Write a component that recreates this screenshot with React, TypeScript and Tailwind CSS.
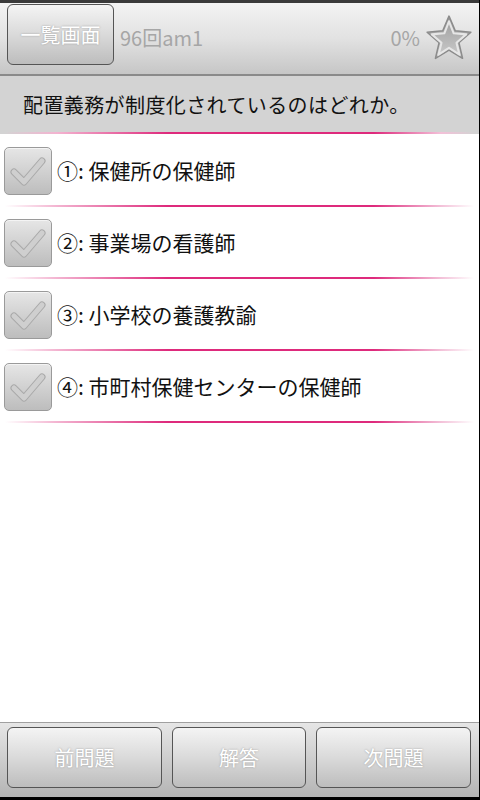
import React from 'react'

const font = { fontFamily: '"Noto Sans CJK JP", "Noto Sans", sans-serif' }

const choices = [
  '①: 保健所の保健師',
  '②: 事業場の看護師',
  '③: 小学校の養護教諭',
  '④: 市町村保健センターの保健師',
]

function PinkLine() {
  return (
    <div className="h-[2px] w-full bg-[linear-gradient(to_right,transparent_1%,#f3b3d0_12%,#de2a7c_35%,#de2a7c_78%,#f3c0d8_92%,transparent_99%)]" />
  )
}

function CheckBox() {
  return (
    <div className="flex h-12 w-12 shrink-0 items-center justify-center rounded-[5px] border border-[#9a9a9a] bg-gradient-to-b from-[#e6e6e6] to-[#bdbdbd] shadow-[inset_0_1px_0_#f4f4f4]">
      <svg width="40" height="40" viewBox="0 0 40 40">
        <path d="M6 21 L16 31 L34 10" fill="none" stroke="#a9a9a9" strokeWidth="7" strokeLinecap="round" strokeLinejoin="round" />
        <path d="M6 21 L16 31 L34 10" fill="none" stroke="#cfcfcf" strokeWidth="5" strokeLinecap="round" strokeLinejoin="round" />
      </svg>
    </div>
  )
}

function Star() {
  return (
    <svg width="50" height="50" viewBox="0 0 48 48">
      <defs>
        <linearGradient id="sg" x1="0" y1="0" x2="0" y2="1">
          <stop offset="0" stopColor="#9a9a9a" />
          <stop offset="1" stopColor="#cdcdcd" />
        </linearGradient>
      </defs>
      <path
        d="M24 3 L30 17 L45 18.5 L33.5 28.5 L37 43.5 L24 35.5 L11 43.5 L14.5 28.5 L3 18.5 L18 17 Z"
        fill="url(#sg)"
        stroke="#8c8c8c"
        strokeWidth="1.5"
        strokeLinejoin="round"
      />
      <path
        d="M24 8 L28.5 19.5 L40.5 20.5 L31.2 28.5 L34 40 L24 33.5 L14 40 L16.8 28.5 L7.5 20.5 L19.5 19.5 Z"
        fill="none"
        stroke="#e6e6e6"
        strokeWidth="2"
        strokeLinejoin="round"
      />
    </svg>
  )
}

function BarButton({ label, className }: { label: string; className: string }) {
  return (
    <button
      className={`flex h-[61px] items-center justify-center rounded-[6px] border border-[#555] bg-gradient-to-b from-[#f4f4f4] via-[#dadada] to-[#bdbdbd] text-[20px] text-white [text-shadow:0_0_2px_#999] ${className}`}
    >
      {label}
    </button>
  )
}

export default function App() {
  return (
    <div className="flex h-[800px] w-[480px] flex-col overflow-hidden border-r border-black bg-white" style={font}>
      <div className="flex h-[76px] shrink-0 items-center border-t-[3px] border-b-2 border-t-[#3a3a3a] border-b-[#8a8a8a] bg-gradient-to-b from-[#f3f3f3] via-[#e2e2e2] to-[#c6c6c6] pl-[7px] pr-[5px]">
        <BarButton label="一覧画面" className="w-[107px] -mt-[8px]" />
        <span className="ml-[6px] -mt-[2px] text-[20px] text-[#a6a6a6]">96回am1</span>
        <span className="ml-auto -mt-[2px] text-[20px] text-[#a6a6a6]">0%</span>
        <div className="ml-[4px] -mt-[2px]">
          <Star />
        </div>
      </div>

      <div className="flex h-[60px] shrink-0 flex-col bg-[#d3d3d3]">
        <div className="flex flex-1 items-center pl-[23px] pt-[2px] text-[20px] tracking-[0.4px] text-[#111]">
          配置義務が制度化されているのはどれか。
        </div>
        <PinkLine />
        <div className="h-[2px] bg-white" />
      </div>

      <div className="flex-1">
        {choices.map((c) => (
          <div key={c} className="flex h-[72px] flex-col">
            <div className="flex flex-1 items-center pl-[4px] pt-[1px]">
              <CheckBox />
              <span className="ml-[5px] text-[21px] text-[#111]">{c}</span>
            </div>
            <PinkLine />
            <div className="h-[1px]" />
          </div>
        ))}
      </div>

      <div className="flex h-[78px] shrink-0 items-start gap-[10px] border-t border-[#a0a0a0] border-b-[3px] border-b-black bg-gradient-to-b from-[#e6e6e6] to-[#b4b4b4] px-[7px] pt-[4px]">
        <BarButton label="前問題" className="w-[155px]" />
        <BarButton label="解答" className="w-[134px]" />
        <BarButton label="次問題" className="w-[155px]" />
      </div>
    </div>
  )
}
